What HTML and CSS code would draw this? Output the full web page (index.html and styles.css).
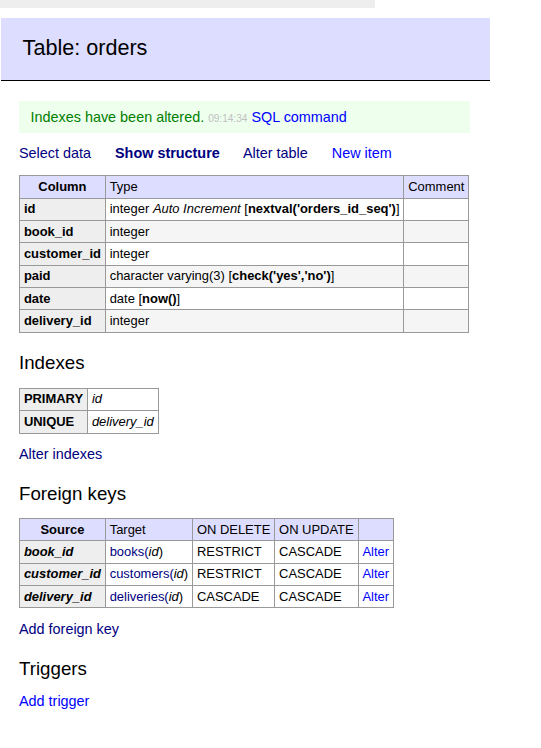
FILE: index.html
```
<!DOCTYPE html>
<html>
<head>
<meta charset="utf-8">
<title>Table: orders</title>
<link rel="stylesheet" href="styles.css">
</head>
<body>
<div class="breadcrumb"></div>
<div class="content">
  <h2>Table: orders</h2>
  <div class="message">Indexes have been altered. <span class="time">09:14:34</span> <a href="#" class="fresh">SQL command</a></div>
  <p class="links"><a href="#">Select data</a> <a href="#" class="active">Show structure</a> <a href="#">Alter table</a> <a href="#" class="fresh">New item</a></p>

  <table class="odds">
    <thead>
      <tr><th>Column</th><td>Type</td><td>Comment</td></tr>
    </thead>
    <tbody>
      <tr><th>id</th><td>integer <i>Auto Increment</i> [<b>nextval('orders_id_seq')</b>]</td><td></td></tr>
      <tr><th>book_id</th><td>integer</td><td></td></tr>
      <tr><th>customer_id</th><td>integer</td><td></td></tr>
      <tr><th>paid</th><td>character varying(3) [<b>check('yes','no')</b>]</td><td></td></tr>
      <tr><th>date</th><td>date [<b>now()</b>]</td><td></td></tr>
      <tr><th>delivery_id</th><td>integer</td><td></td></tr>
    </tbody>
  </table>

  <h3>Indexes</h3>
  <table>
    <tbody>
      <tr><th>PRIMARY</th><td><i>id</i></td></tr>
      <tr><th>UNIQUE</th><td><i>delivery_id</i></td></tr>
    </tbody>
  </table>
  <p class="links"><a href="#">Alter indexes</a></p>

  <h3>Foreign keys</h3>
  <table>
    <thead>
      <tr><th>Source</th><td>Target</td><td>ON DELETE</td><td>ON UPDATE</td><td></td></tr>
    </thead>
    <tbody>
      <tr><th><i>book_id</i></th><td><a href="#">books(</a><i>id</i>)</td><td>RESTRICT</td><td>CASCADE</td><td><a href="#" class="fresh">Alter</a></td></tr>
      <tr><th><i>customer_id</i></th><td><a href="#">customers(</a><i>id</i>)</td><td>RESTRICT</td><td>CASCADE</td><td><a href="#" class="fresh">Alter</a></td></tr>
      <tr><th><i>delivery_id</i></th><td><a href="#">deliveries(</a><i>id</i>)</td><td>CASCADE</td><td>CASCADE</td><td><a href="#" class="fresh">Alter</a></td></tr>
    </tbody>
  </table>
  <p class="links"><a href="#">Add foreign key</a></p>

  <h3>Triggers</h3>
  <p class="links"><a href="#" class="fresh">Add trigger</a></p>
</div>
</body>
</html>
```
FILE: styles.css
```
html, body {
  margin: 0;
  padding: 0;
  background: #fff;
}
body {
  color: #000;
  font: 14.4px/1.25 "Liberation Sans", Arial, sans-serif;
}
a {
  color: navy;
  text-decoration: none;
}
a.fresh {
  color: blue;
}
.breadcrumb {
  width: 375px;
  height: 8px;
  background: #eee;
}
.content {
  margin: 0 0 0 19px;
  padding: 10px 0 20px 0;
  width: 471px;
}
h2 {
  font-size: 21.6px;
  line-height: 1.25;
  margin: 0 0 20px -18px;
  padding: 17.28px 21.6px;
  border-bottom: 1px solid #000;
  font-weight: normal;
  background: #ddf;
}
h3 {
  font-weight: normal;
  font-size: 18.72px;
  line-height: 1.25;
  margin: 18.72px 0 0;
}
p {
  margin: 11.52px 20px 0 0;
}
.message {
  color: green;
  background: #efe;
  padding: 7.2px 11.52px;
  margin: 0 20px 0 0;
}
.time {
  color: silver;
  font-size: 10.08px;
}
.links a {
  white-space: nowrap;
  margin-right: 20px;
}
.active {
  font-weight: bold;
}
table {
  margin: 12.96px 20px 0 0;
  border-collapse: collapse;
  font-size: 12.96px;
  line-height: 1.25;
}
td, th {
  border: 1px solid #999;
  padding: 2.59px 3.89px;
  white-space: nowrap;
  text-align: left;
}
th {
  background: #eee;
}
thead th {
  text-align: center;
  padding: 2.59px 6.48px;
}
thead td, thead th {
  background: #ddf;
}
.odds tbody tr:nth-child(2n) {
  background: #f5f5f5;
}
.odds tbody tr:nth-child(2n) th {
  background: #eee;
}
```
